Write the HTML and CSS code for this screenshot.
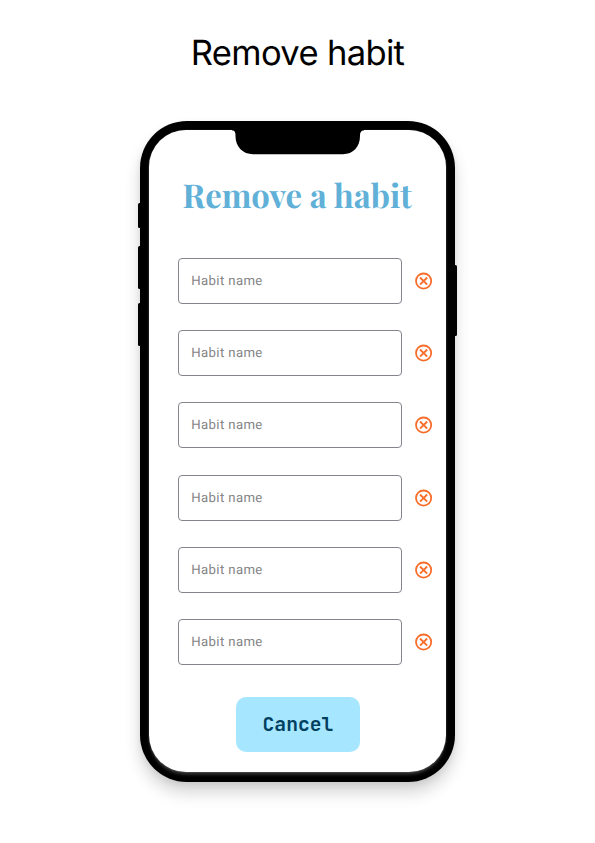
FILE: index.html
```html
<!DOCTYPE html>
<html lang="en">
<head>
<meta charset="utf-8">
<title>Remove habit</title>
<link rel="stylesheet" href="styles.css">
</head>
<body>
<svg class="symbols" width="0" height="0"><symbol id="remove" viewBox="0 0 18 18"><g fill="none" stroke="#f76e2c" stroke-width="1.8"><circle cx="8.600" cy="9.100" r="7.600"/><path d="M5 5.500l7.200 7.200M12.200 5.500l-7.200 7.200"/></g></symbol></svg>
<h1 class="page-title">Remove habit</h1>
<main class="phone">
  <span class="key key-mute"></span>
  <span class="key key-up"></span>
  <span class="key key-down"></span>
  <span class="key key-power"></span>
  <section class="screen">
    <h2 class="heading">Remove a habit</h2>
    <div class="list">
      <div class="row"><div class="field">Habit name</div><svg class="icon"><use href="#remove"/></svg></div>
      <div class="row"><div class="field">Habit name</div><svg class="icon"><use href="#remove"/></svg></div>
      <div class="row"><div class="field">Habit name</div><svg class="icon"><use href="#remove"/></svg></div>
      <div class="row"><div class="field">Habit name</div><svg class="icon"><use href="#remove"/></svg></div>
      <div class="row"><div class="field">Habit name</div><svg class="icon"><use href="#remove"/></svg></div>
      <div class="row"><div class="field">Habit name</div><svg class="icon"><use href="#remove"/></svg></div>
    </div>
    <button class="cancel">Cancel</button>
  </section>
  <svg class="notch" width="132" height="28" viewBox="0 -3 132 28"><path d="M0 -3H132V.6C129 .6 128 2.500 128 6C128 17 121 24.200 111 24.200H21C11 24.200 3.500 17 3.500 6C3.500 2.500 3 .6 0 .6Z"/></svg>
</main>
</body>
</html>
```
FILE: styles.css
```css
* { box-sizing: border-box; }
body { margin: 0; height: 843px; background: #fff; overflow: hidden; display: flex; flex-direction: column; align-items: center; text-rendering: geometricPrecision; }
.symbols { position: absolute; }
.page-title { margin: 31px 0 0; font: 400 34.600px/44px Inter, sans-serif; letter-spacing: -0.680px; color: #000; white-space: nowrap; }
.phone { position: relative; margin-top: 46px; width: 315px; height: 661px; padding: 9px 9.500px 10px 9px; border-radius: 47px; background: #000; box-shadow: 0 11px 16px rgba(0,0,0,.16), 0 3px 6px rgba(0,0,0,.07); }
.screen { height: 642px; border-radius: 37px; background: #fff; padding-top: 44px; box-shadow: 0 1px 1px #444, 0 3px 3px #2b2b2b, 0 0 1px #666; display: flex; flex-direction: column; }
.notch { position: absolute; left: 91.500px; top: 6px; display: block; }
.key { position: absolute; width: 4px; background: #000; border-radius: 1.500px; }
.key-mute { left: -2px; top: 82px; height: 25px; }
.key-up { left: -2px; top: 125px; height: 43px; }
.key-down { left: -2px; top: 182px; height: 43px; }
.key-power { right: -2px; top: 144px; height: 71px; }
.heading { margin: 0; height: 44px; font: 700 32.800px/44px "Playfair Display", "Liberation Serif", serif; color: #60b0d7; text-align: center; white-space: nowrap; }
.list { margin: 40px 0 0 29px; display: flex; flex-direction: column; gap: 26.200px; }
.row { display: flex; align-items: center; gap: 13px; height: 46px; }
.field { width: 224px; height: 46px; border: 1px solid #85838c; border-radius: 4px; padding-left: 12.300px; font: 400 13.200px/45px Roboto, sans-serif; letter-spacing: .36px; color: #858585; }
.icon { width: 18px; height: 18px; }
.cancel { margin: 32px 0 0 87px; width: 124px; height: 55px; border: 0; border-radius: 10px; background: #a6e6ff; padding: 0; font: 700 19.700px/55px "JetBrains Mono", "DejaVu Sans Mono", monospace; color: #00405f; }
```
